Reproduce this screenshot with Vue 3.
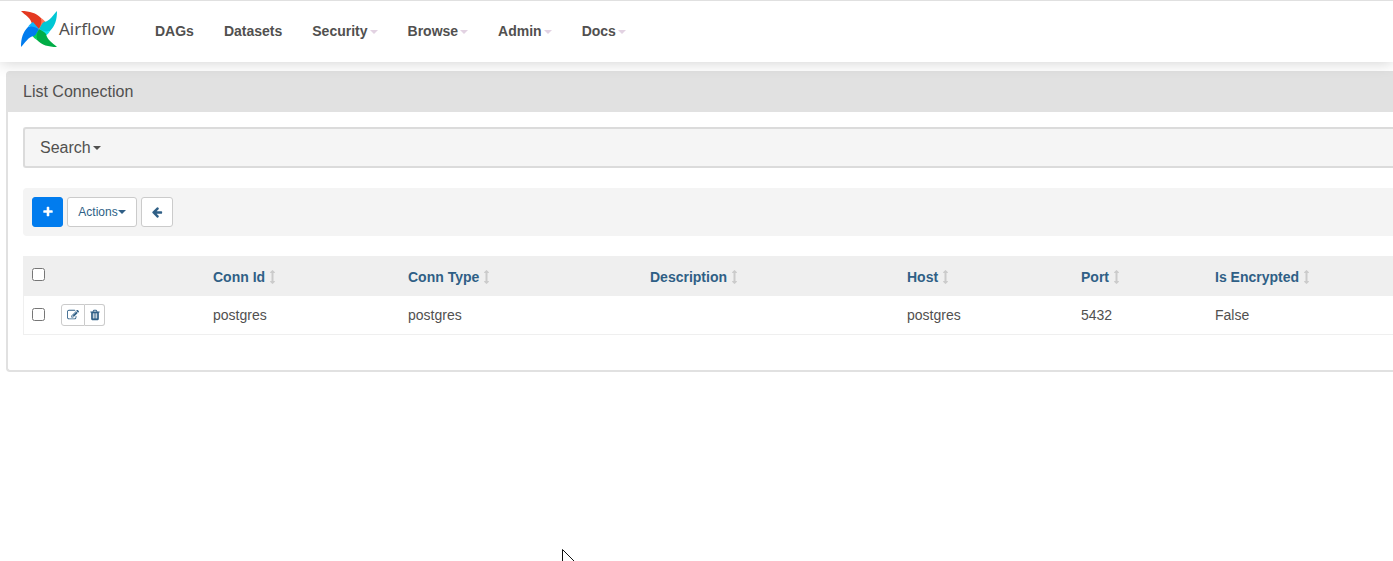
<script setup>
import { ref } from 'vue'

const nav = [
  { label: 'DAGs', menu: false },
  { label: 'Datasets', menu: false },
  { label: 'Security', menu: true },
  { label: 'Browse', menu: true },
  { label: 'Admin', menu: true },
  { label: 'Docs', menu: true },
]
const columns = ['Conn Id', 'Conn Type', 'Description', 'Host', 'Port', 'Is Encrypted']
const rows = [['postgres', 'postgres', '', 'postgres', '5432', 'False']]
const all = ref(false)
const picked = ref([false])

const blades = [
  { turn: 'rotate(0 18 18)', face: '#e43921', fold: '#ff7557' },
  { turn: 'rotate(90 18 18)', face: '#00c7d4', fold: '#11e1ee' },
  { turn: 'rotate(180 18 18)', face: '#00ad46', fold: '#04d659' },
  { turn: 'rotate(270 18 18)', face: '#017cee', fold: '#0cb6ff' },
]

const icons = {
  plus: 'M1600 736v192q0 40-28 68t-68 28h-416v416q0 40-28 68t-68 28h-192q-40 0-68-28t-28-68v-416h-416q-40 0-68-28t-28-68v-192q0-40 28-68t68-28h416v-416q0-40 28-68t68-28h192q40 0 68 28t28 68v416h416q40 0 68 28t28 68z',
  back: 'M1664 896v128q0 53-32.5 90.5t-84.5 37.5h-704l293 294q38 36 38 90t-38 90l-75 76q-37 37-90 37-52 0-91-37l-651-652q-37-37-37-90 0-52 37-91l651-650q38-38 91-38 52 0 90 38l75 74q38 38 38 91t-38 91l-293 293h704q52 0 84.5 37.5t32.5 90.5z',
  edit: 'M888 1184l116-116-152-152-116 116v56h96v96h56zm440-720q-16-16-33 1l-350 350q-17 17-1 33t33-1l350-350q17-17 1-33zm80 594v190q0 119-84.5 203.5t-203.5 84.5h-832q-119 0-203.5-84.5t-84.5-203.5v-832q0-119 84.5-203.5t203.5-84.5h832q63 0 117 25 15 7 18 23 3 17-9 29l-49 49q-14 14-32 8-23-6-45-6h-832q-66 0-113 47t-47 113v832q0 66 47 113t113 47h832q66 0 113-47t47-113v-126q0-13 9-22l64-64q15-15 35-7t20 29zm-96-738l288 288-672 672h-288v-288zm444 132l-92 92-288-288 92-92q28-28 68-28t68 28l152 152q28 28 28 68t-28 68z',
  trash: 'M704 1376v-704q0-14-9-23t-23-9h-64q-14 0-23 9t-9 23v704q0 14 9 23t23 9h64q14 0 23-9t9-23zm256 0v-704q0-14-9-23t-23-9h-64q-14 0-23 9t-9 23v704q0 14 9 23t23 9h64q14 0 23-9t9-23zm256 0v-704q0-14-9-23t-23-9h-64q-14 0-23 9t-9 23v704q0 14 9 23t23 9h64q14 0 23-9t9-23zm-544-992h448l-48-117q-7-9-17-11h-317q-10 2-17 11zm928 32v64q0 14-9 23t-23 9h-96v948q0 83-47 143.5t-113 60.5h-832q-66 0-113-58.5t-47-141.5v-952h-96q-14 0-23-9t-9-23v-64q0-14 9-23t23-9h309l70-167q15-37 54-63t79-26h320q40 0 79 26t54 63l70 167h309q14 0 23 9t9 23z',
  sort: 'M1216 320q0 26-19 45t-45 19h-128v1024h128q26 0 45 19t19 45-19 45l-256 256q-19 19-45 19t-45-19l-256-256q-19-19-19-45t19-45 45-19h128v-1024h-128q-26 0-45-19t-19-45 19-45l256-256q19-19 45-19t45 19l256 256q19 19 19 45z',
}
</script>

<template>
  <div class="page">
    <header class="navbar">
      <a class="brand" href="#">
        <svg class="pinwheel" viewBox="0 0 36 36" aria-hidden="true">
          <g v-for="b in blades" :key="b.face" :transform="b.turn">
            <path :fill="b.face" d="M0 0C9 0 15 2 20 7L22 12L18 18C15 16 12 15 11 13C10 7 4 4 0 0Z" />
            <path :fill="b.fold" d="M20 7C22 8 24 10 25 12L18 18C20 14 21 11 20 7Z" />
          </g>
        </svg>
        <span>Airflow</span>
      </a>
      <nav class="links">
        <a v-for="item in nav" :key="item.label" href="#">
          {{ item.label }}<i v-if="item.menu" class="caret"></i>
        </a>
      </nav>
    </header>

    <main class="panel">
      <h1 class="heading">List Connection</h1>
      <div class="body">
        <button class="search" type="button">Search<i class="caret"></i></button>

        <div class="toolbar">
          <button class="btn primary" type="button" aria-label="Add">
            <svg viewBox="0 0 1792 1792"><path :d="icons.plus" /></svg>
          </button>
          <button class="btn actions" type="button">Actions<i class="caret"></i></button>
          <button class="btn" type="button" aria-label="Back">
            <svg viewBox="0 0 1792 1792"><path :d="icons.back" /></svg>
          </button>
        </div>

        <table>
          <colgroup>
            <col class="c-check" /><col class="c-tools" /><col class="c-id" /><col class="c-type" />
            <col class="c-desc" /><col class="c-host" /><col class="c-port" /><col />
          </colgroup>
          <thead>
            <tr>
              <th class="pick"><input v-model="all" type="checkbox" aria-label="Select all" /></th>
              <th></th>
              <th v-for="c in columns" :key="c">
                <a href="#">{{ c }}<svg class="sort" viewBox="576 0 640 1792"><path :d="icons.sort" /></svg></a>
              </th>
            </tr>
          </thead>
          <tbody>
            <tr v-for="(r, i) in rows" :key="i">
              <td class="pick"><input v-model="picked[i]" type="checkbox" aria-label="Select row" /></td>
              <td>
                <div class="group">
                  <button type="button" aria-label="Edit"><svg viewBox="0 0 1792 1792"><path :d="icons.edit" /></svg></button>
                  <button type="button" aria-label="Delete"><svg viewBox="0 0 1792 1792"><path :d="icons.trash" /></svg></button>
                </div>
              </td>
              <td v-for="(v, j) in r" :key="j">{{ v }}</td>
            </tr>
          </tbody>
        </table>
      </div>
    </main>

    <svg class="pointer" viewBox="0 0 12 12" aria-hidden="true">
      <path d="M.5 12V.5L12 12" fill="#fff" stroke="#111" />
    </svg>
  </div>
</template>

<style>
body {
  margin: 0;
  background: #fff;
}
</style>

<style scoped>
* {
  box-sizing: border-box;
}
.page {
  position: relative;
  min-height: 100vh;
  overflow: hidden;
  color: #51504f;
  font: 14px/20px "Liberation Sans", Arial, sans-serif;
}
a {
  color: inherit;
  text-decoration: none;
}
button {
  font: inherit;
  color: inherit;
  cursor: pointer;
}
svg {
  fill: currentColor;
}
.navbar {
  position: relative;
  display: flex;
  align-items: flex-start;
  height: 62px;
  padding: 10px 21px 0;
  border-top: 1px solid #e0e0e0;
  background: #fff;
  box-shadow: 0 0 15px rgba(0, 0, 0, 0.2);
}
.brand {
  display: flex;
  align-items: center;
  gap: 2px;
  width: 119px;
  font: 17px/24px "Noto Sans", sans-serif;
}
.pinwheel {
  width: 36px;
  height: 36px;
}
.links {
  display: flex;
  gap: 30px;
  padding: 10px 0 0 15px;
  font-weight: 700;
}
.caret {
  display: inline-block;
  margin-left: 2px;
  vertical-align: middle;
  border: 4px solid transparent;
  border-top-color: currentColor;
  border-bottom: 0;
}
.links .caret {
  border-top-color: #e2d2e2;
}
.panel {
  margin: 9px 0 0 6px;
  border: 2px solid #e1e1e1;
  border-right: 0;
  border-radius: 4px 0 0 4px;
}
.heading {
  margin: 0;
  padding: 9px 15px 10px;
  background: #e1e1e1;
  font-size: 16px;
  line-height: 20px;
  font-weight: 400;
}
.body {
  padding: 15px 0 35px 15px;
}
.search {
  display: block;
  width: 100%;
  height: 41px;
  padding: 0 15px;
  border: 2px solid #dbdbdb;
  border-right: 0;
  border-radius: 3px 0 0 3px;
  background: #f5f5f5;
  font-size: 16px;
  text-align: left;
}
.toolbar {
  display: flex;
  gap: 4px;
  margin: 20px 0;
  padding: 9px;
  border-radius: 4px 0 0 4px;
  background: #f4f4f4;
}
.btn {
  display: flex;
  align-items: center;
  justify-content: center;
  height: 30px;
  padding: 0 9px;
  border: 1px solid #cbcbcb;
  border-radius: 3px;
  background: #fff;
  color: #2f5f86;
  font-size: 12px;
}
.actions {
  width: 70px;
}
.btn .caret {
  margin-left: 0;
}
.btn svg {
  width: 12px;
  height: 12px;
  flex: none;
}
.primary {
  width: 31px;
  border-color: #017cee;
  background: #017cee;
  color: #fff;
}
table {
  width: 100%;
  table-layout: fixed;
  border-spacing: 0;
  border-left: 1px solid #efefef;
}
.c-check { width: 29px; }
.c-tools { width: 152px; }
.c-id { width: 195px; }
.c-type { width: 242px; }
.c-desc { width: 257px; }
.c-host { width: 174px; }
.c-port { width: 134px; }
th,
td {
  padding: 8px;
  text-align: left;
  line-height: 22px;
}
th {
  height: 40px;
  padding: 10px 8px 8px;
  background: #efefef;
  color: #2f5f86;
}
td {
  height: 39px;
  border-bottom: 1px solid #efefef;
}
.pick {
  padding-top: 12px;
  vertical-align: top;
}
input {
  display: block;
  width: 13px;
  height: 13px;
  margin: 0;
}
.sort {
  width: 5px;
  height: 14px;
  margin-left: 5px;
  vertical-align: -2px;
  color: #cbcbcb;
}
.group {
  display: flex;
  width: max-content;
}
.group button {
  display: flex;
  align-items: center;
  justify-content: center;
  width: 24px;
  height: 22px;
  padding: 0;
  border: 1px solid #cbcbcb;
  border-radius: 3px 0 0 3px;
  background: #fff;
  color: #2f5f86;
}
.group button + button {
  width: 20px;
  border-left: 0;
  border-radius: 0 3px 3px 0;
}
.group svg {
  width: 12px;
  height: 12px;
}
.pointer {
  position: absolute;
  left: 562px;
  top: 549px;
  width: 12px;
  height: 12px;
}
</style>
